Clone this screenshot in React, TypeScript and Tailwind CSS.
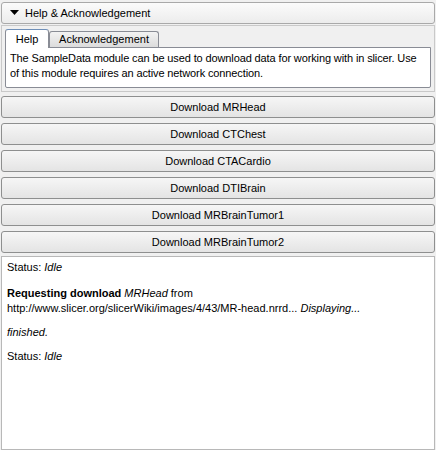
import React from 'react';

const buttons = ['MRHead', 'CTChest', 'CTACardio', 'DTIBrain', 'MRBrainTumor1', 'MRBrainTumor2'];

function DownloadButton({ name }: { name: string }) {
    return (
        <button className="h-[22px] w-full rounded-[3px] border border-[#8e8f8f] bg-gradient-to-b from-[#f6f6f6] to-[#e4e4e4] text-center text-[11px] leading-none text-black">
            Download {name}
        </button>
    );
}

export default function App() {
    return (
        <div
            className="flex h-[450px] w-[436px] flex-col bg-[#f0f0f0] px-[1px] pt-[2px] text-[11px] text-black"
            style={{ fontFamily: '"Liberation Sans", Arial, sans-serif' }}
        >
            {/* Collapsible header */}
            <div className="flex h-[22px] items-center gap-[6px] rounded-[3px] border border-[#a9a9a9] bg-gradient-to-b from-[#fbfbfb] to-[#ececec] pl-[8px]">
                <svg width="9" height="6" viewBox="0 0 9 6">
                    <path d="M0 0 L9 0 L4.5 5 Z" fill="#000" />
                </svg>
                <span>Help &amp; Acknowledgement</span>
            </div>

            {/* Help panel */}
            <div className="mt-[1px] h-[67px] border border-[#c9c9c9] px-[3px] pt-[3px]">
                <div className="flex items-end">
                    <div className="z-10 -mb-px flex h-[19px] w-[44px] items-center justify-center rounded-t-[3px] border border-b-0 border-[#898c95] border-t-[#6f8fb8] bg-white">
                        Help
                    </div>
                    <div className="flex h-[16px] w-[110px] items-center justify-center rounded-t-[3px] border border-b-0 border-[#898c95] bg-gradient-to-b from-[#f2f2f2] to-[#dcdcdc]">
                        Acknowledgement
                    </div>
                </div>
                <div className="h-[41px] rounded-b-[2px] border border-[#898c95] bg-white pl-[4px] pr-[2px] pt-[3px] leading-[15px] tracking-[-0.12px]">
                    The SampleData module can be used to download data for working with in slicer. Use of this module requires an active network connection.
                </div>
            </div>

            {/* Download buttons */}
            <div className="mt-[4px] flex flex-col gap-[5px]">
                {buttons.map((b) => (
                    <DownloadButton key={b} name={b} />
                ))}
            </div>

            {/* Log */}
            <div className="mt-[3px] flex-1 border border-[#b8b8b8] bg-white px-[5px] pt-[3px] leading-[15px]">
                <p>
                    Status: <i>Idle</i>
                </p>
                <p className="mt-[11px]">
                    <b>Requesting download</b> <i>MRHead</i> from
                    <br />
                    http://www.slicer.org/slicerWiki/images/4/43/MR-head.nrrd... <i>Displaying...</i>
                </p>
                <p className="mt-[9px]">
                    <i>finished.</i>
                </p>
                <p className="mt-[9px]">
                    Status: <i>Idle</i>
                </p>
            </div>
        </div>
    );
}
